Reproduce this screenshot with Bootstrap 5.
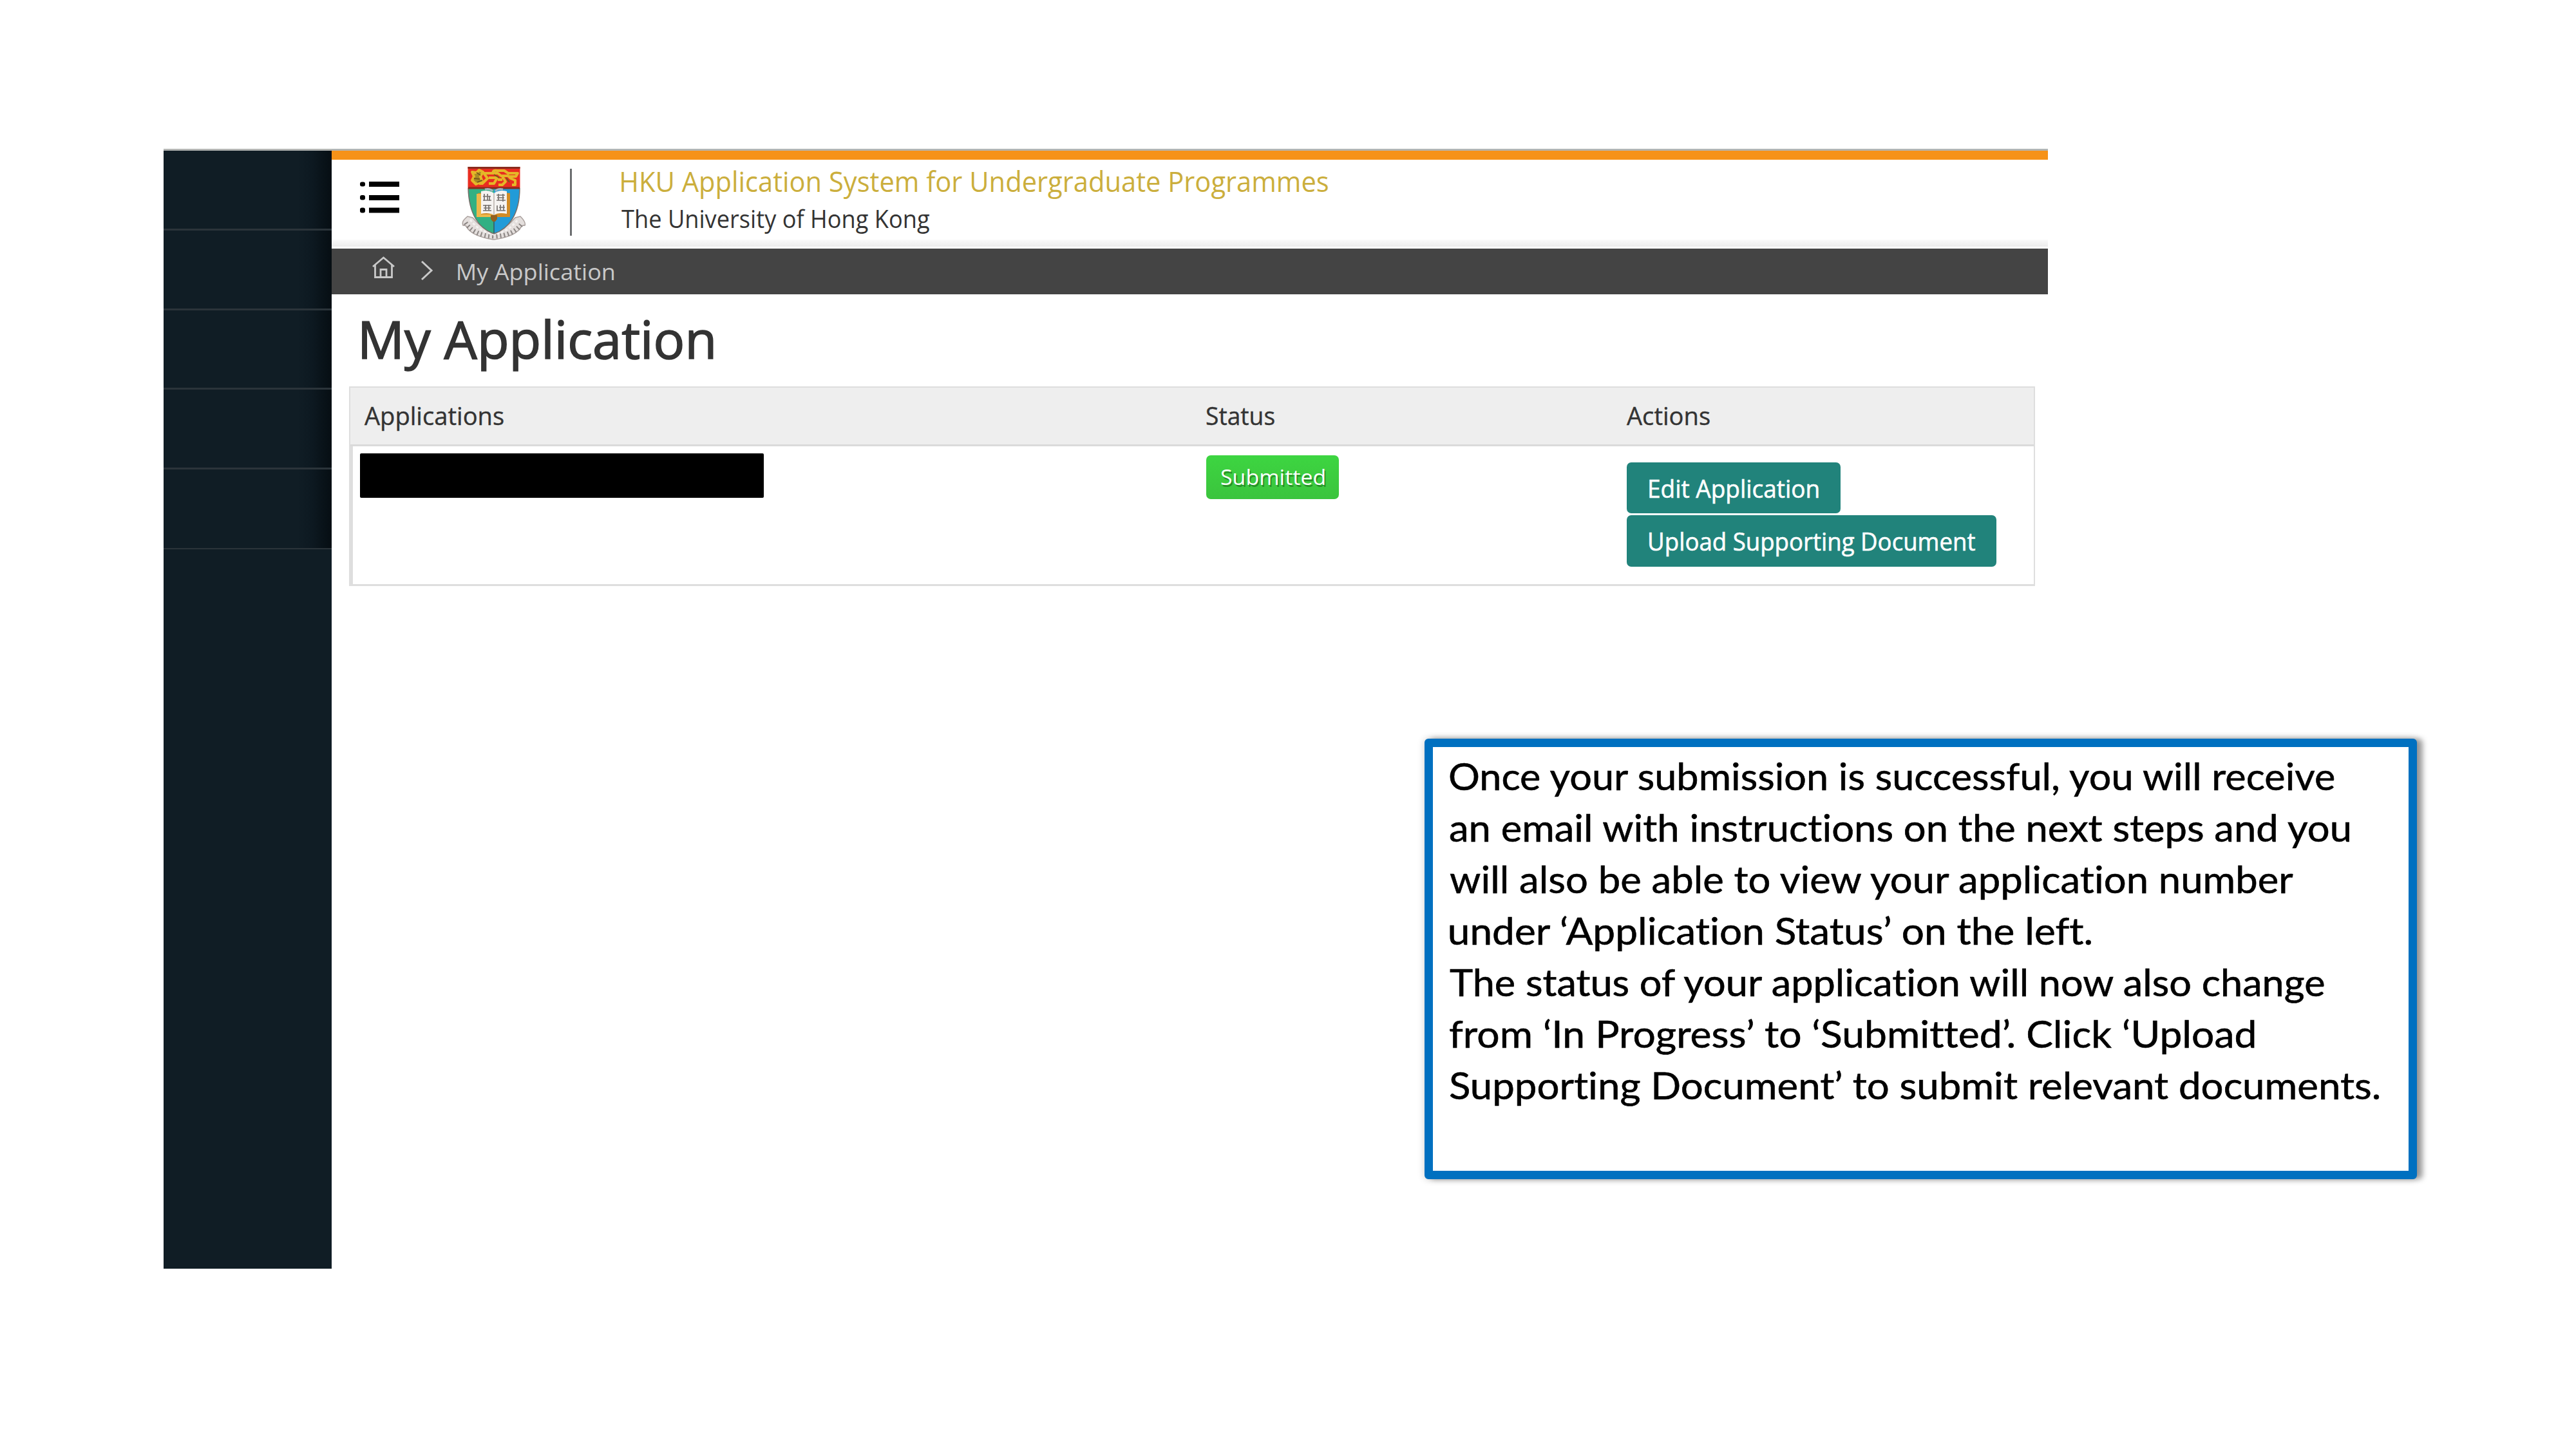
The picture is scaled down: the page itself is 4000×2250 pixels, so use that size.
<!DOCTYPE html>
<html lang="en">
<head>
<meta charset="utf-8">
<meta name="viewport" content="width=device-width, initial-scale=1">
<title>My Application</title>
<link href="https://cdn.jsdelivr.net/npm/bootstrap@5.3.0/dist/css/bootstrap.min.css" rel="stylesheet">
<style>
body{width:4000px;height:2250px;margin:0;background:#fff;color:#333;font-family:"Open Sans","Noto Sans",sans-serif;overflow:hidden}
.slide{width:4000px;height:2250px;padding:231px 0 0 254px}
.screen{width:2926px;height:1739px;border-top:3px solid #b3b5b3}
.side{width:261px;background:#101d25}
.side-item{height:124px;border-bottom:3px solid #2b343a;background:linear-gradient(90deg,#101d25 80%,#0d1921 88%,#060e13 100%)}
.side-item:nth-child(2n+1){height:123.6px}
.side-item:last-child{border-bottom-width:2px}
.topbar{height:152px;border-top:14px solid #f69218;padding-left:43px;background:linear-gradient(#fff 0 0) 0 100%/100% 3px no-repeat,linear-gradient(#fafafa,#ebebeb) 0 124px/100% 11px no-repeat,#fff}
.burger{width:64px;height:50px;margin-top:33px}
.crest{width:102px;height:116px;margin:10px 0 0 94px}
.rule{width:3px;height:104px;background:#6b6d6f;margin:14px 0 0 67px}
.brand{padding:3px 0 0 77px}
.brand-a{font-size:43.5px;line-height:62px;color:#cbae3c}
.brand-b{font-size:38px;line-height:52px;color:#333}
.crumbs{height:71px;background:#444;color:#c9c9c9;font-size:34px;line-height:72px;padding-left:62px}
.home-ico{width:37px;height:36px;margin-top:11px}
.chev{width:20px;height:32px;margin:18px 0 0 39px}
.crumb-text{margin-left:38px}
.title{font-size:80px;line-height:137px;height:143px;padding-left:47px;margin:0;font-weight:400;color:#333;-webkit-text-stroke:1.6px #333}
.grid-box{width:2618px;margin-left:27px;border:2px solid #dedede;border-bottom-width:3px}
.cells{display:grid;grid-template-columns:1329px 653px 1fr}
.head-row{height:91px;background:#eee;border-bottom:3px solid #dadada;font-size:38px;line-height:87px;margin:0;-webkit-text-stroke:.4px #333}
.head-row .first{padding-left:22px}
.body-row{height:214px;border-left:4px solid #dedede}
.body-row.cells{grid-template-columns:1325px 653px 1fr}
.redact{width:627px;height:69px;background:#000;border-radius:2px;margin:11px 0 0 11px}
.state{width:206px;height:68px;margin-top:14px;padding-left:23px;border-radius:7px;background:linear-gradient(#3dd541,#3bc43d);color:#fff;font-size:33px;line-height:68px;text-shadow:2px 3px 0 rgba(20,90,20,.55)}
.act{background:#21837b;color:#fff;border:0;border-radius:7px;padding:0 0 0 35px;text-align:left;font-size:38px;line-height:80px;display:block;-webkit-text-stroke:.6px #fff}
.act-edit{width:332px;height:79px;margin-top:25px}
.act-up{width:574px;height:80px;margin-top:3px}
.note{left:2212px;top:1147px;width:1541px;height:684px;border:13px solid #0070c0;border-radius:6px;background:#fff;color:#000;padding:4px 0 0 26px;font-family:Lato,sans-serif;font-size:58.5px;line-height:80px;-webkit-text-stroke:.6px #000;box-shadow:9px 0 8px rgba(0,0,0,.36),0 0 12px rgba(0,0,0,.2)}
.fit{display:inline-block;white-space:nowrap;transform-origin:0 50%;font-variant-ligatures:none;letter-spacing:.01px}
</style>
<script src="https://cdn.jsdelivr.net/npm/bootstrap@5.3.0/dist/js/bootstrap.bundle.min.js"></script>
</head>
<body>
<main class="slide position-relative">
  <div class="screen d-flex">
    <aside class="side flex-shrink-0">
      <div class="side-item"></div><div class="side-item"></div><div class="side-item"></div><div class="side-item"></div><div class="side-item"></div>
    </aside>
    <div class="flex-grow-1">
      <header class="topbar d-flex align-items-start">
        <svg class="burger" viewBox="0 0 64 50"><g fill="#000"><rect x="15" y="1" width="47" height="8"/><rect x="15" y="22" width="47" height="8"/><rect x="15" y="41.500" width="47" height="8"/><rect x="1" y="1.500" width="8" height="7" rx="3"/><rect x="1" y="22" width="8" height="7.500" rx="3"/><rect x="1" y="41.500" width="8" height="8" rx="3"/></g></svg>
        <svg class="crest" viewBox="0 0 102 116">
          <path d="M10 78C3 84 1 87 3 92Q8 91 11 98Q22 110 51 114Q80 110 91 98Q94 91 99 92Q101 87 92 78L84 80Q70 97 51 104Q32 97 18 80Z" fill="#e4dfdd" stroke="#aaa09d" stroke-width="1.500"/>
          <path d="M7 88Q20 108 51 109Q82 108 95 88" fill="none" stroke="#8b8583" stroke-width="7" stroke-dasharray="2 4"/>
          <path d="M14 83Q28 102 51 106Q74 102 88 83" fill="none" stroke="#f5f2f1" stroke-width="3" stroke-dasharray="4 3"/>
          <path d="M11 34H51V105C28 97 12 75 11 34Z" fill="#32b083"/>
          <path d="M51 34H91C91 75 74 97 51 105Z" fill="#219bd8"/>
          <path d="M11 34C12 75 28 97 51 105C74 97 91 75 91 34" fill="none" stroke="#766d68" stroke-width="1.500"/>
          <rect x="10.500" y="1" width="81" height="33" fill="#e92d20"/>
          <path d="M10.500 2.500H91.500M11 34H91" stroke="#892c1d" stroke-width="3"/>
          <g fill="none" stroke="#e5b728" stroke-width="4" stroke-linejoin="round"><path d="M34 11H57L62 15H73L77 19L84 22V29H79M36 12L41 19L33 27H28M43 18H56L51 27H43M64 16L69 24L64 29H58M50 11Q48 6 56 7H67L73 11H88L85 16H74M57 21H64"/><path d="M17 9L20 16L17 22L23 28L33 24L30 16L34 9L28 6L24 10Z" fill="#a98d25"/></g>
          <path d="M24 10L30 14M20 19L29 20M25 25L33 22M51 13L59 18M70 18L75 25" stroke="#78581b" stroke-width="2"/>
          <path d="M26 42L47 40L51 43L55 40L76 42V79H26Z" fill="#d28b25"/>
          <path d="M24 43H31V75H49V79H24Z" fill="#edb84b"/>
          <path d="M31 39Q43 36 51 42Q59 36 71 39V74Q58 71 51 76Q43 71 31 74Z" fill="#f6f3f1"/>
          <path d="M51 42V76" stroke="#c9c2bd" stroke-width="2"/>
          <g stroke="#77716e" stroke-width="1.700" fill="none"><path d="M34 47H46M36 43V54M41 43V53M34 53H47M44 46V54M34 61H47M35 65H46M34 69H47M38 60V69M43 60V69M55 45H68M56 49H67M55 53H69M58 43V53M65 43V55M56 61V69M61 60V68M66 60V69M55 69H69M59 64H68"/></g>
          <path d="M46 76H56V82L53 86H49L46 82Z" fill="#94601f"/><path d="M51 86V104" stroke="#356a70" stroke-width="2"/>
          <path d="M37 36Q45 34 49 39M65 36Q57 34 53 39" stroke="#a3b3bd" stroke-width="3" fill="none"/>
        </svg>
        <div class="rule"></div>
        <div class="brand">
          <div class="brand-a"><span class="fit" data-w="1097">HKU Application System for Undergraduate Programmes</span></div>
          <div class="brand-b"><span class="fit" data-w="478">The University of Hong Kong</span></div>
        </div>
      </header>
      <nav class="crumbs d-flex align-items-start">
        <svg class="home-ico" viewBox="0 0 37 36" fill="none" stroke="#c9c9c9" stroke-width="2.800"><path d="M2 17L18.500 3L35 17M5.500 14V33.500H31.500V14M14 33V21.500H23V33"/></svg>
        <svg class="chev" viewBox="0 0 20 32" fill="none" stroke="#c9c9c9" stroke-width="3"><path d="M2 2L17 16L2 30"/></svg>
        <div class="crumb-text"><span class="fit" data-w="243">My Application</span></div>
      </nav>
      <h1 class="title"><span class="fit" data-w="545">My Application</span></h1>
      <section class="grid-box">
        <div class="head-row cells">
          <div class="first"><span class="fit" data-w="216">Applications</span></div>
          <div><span class="fit" data-w="106">Status</span></div>
          <div><span class="fit" data-w="129">Actions</span></div>
        </div>
        <div class="body-row cells">
          <div><div class="redact"></div></div>
          <div><div class="state"><span class="fit" data-w="161">Submitted</span></div></div>
          <div>
            <button type="button" class="btn act act-edit"><span class="fit" data-w="263">Edit Application</span></button>
            <button type="button" class="btn act act-up"><span class="fit" data-w="506">Upload Supporting Document</span></button>
          </div>
        </div>
      </section>
    </div>
  </div>
  <aside class="note position-absolute">
    <div><span class="fit" data-w="1379">Once your submission is successful, you will receive</span></div>
    <div><span class="fit" data-w="1400">an email with instructions on the next steps and you</span></div>
    <div><span class="fit" data-w="1315">will also be able to view your application number</span></div>
    <div><span class="fit" data-w="998">under ‘Application Status’ on the left.</span></div>
    <div><span class="fit" data-w="1364">The status of your application will now also change</span></div>
    <div><span class="fit" data-w="1250">from ‘In Progress’ to ‘Submitted’. Click ‘Upload</span></div>
    <div><span class="fit" data-w="1444">Supporting Document’ to submit relevant documents.</span></div>
  </aside>
</main>
<script>
// Scale each label so its ink spans data-w pixels, starting at its container's edge.
const ctx = document.createElement('canvas').getContext('2d');
document.querySelectorAll('.fit').forEach(el => {
  const s = getComputedStyle(el);
  ctx.font = s.fontWeight + ' ' + s.fontSize + ' ' + s.fontFamily;
  ctx.letterSpacing = '0.01px';
  const m = ctx.measureText(el.textContent);
  const k = el.dataset.w / (m.actualBoundingBoxRight + m.actualBoundingBoxLeft);
  el.style.transform = `translateX(${m.actualBoundingBoxLeft * k}px) scaleX(${k})`;
});
</script>
</body>
</html>
